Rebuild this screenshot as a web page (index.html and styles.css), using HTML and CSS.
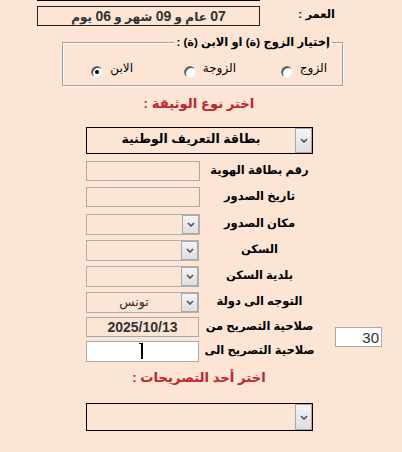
FILE: index.html
```html
<!DOCTYPE html>
<html lang="ar" dir="rtl">
<head>
<meta charset="utf-8">
<title>نموذج التصريح</title>
<link rel="stylesheet" href="styles.css">
</head>
<body>
<div class="page">
  <div class="topline"></div>
  <div class="age-row">
    <div class="age-label">العمر :</div>
    <div class="age-box"><b class="num">07</b> عام و <b class="num">09</b> شهر و <b class="num">06</b> يوم</div>
  </div>

  <fieldset class="rel">
    <legend>إختيار الزوج (ة) او الابن (ة) :</legend>
    <div class="radios">
      <label class="opt o1"><span>الزوج</span><span class="radio"></span></label>
      <label class="opt o2"><span>الزوجة</span><span class="radio"></span></label>
      <label class="opt o3"><span>الابن</span><span class="radio on"></span></label>
    </div>
  </fieldset>

  <h2 class="title t1">اختر نوع الوثيقة :</h2>

  <div class="form">
    <div class="bigsel">
      <span class="btn"><svg width="8" height="5" viewBox="0 0 8 5"><path d="M1 1l3 3 3-3" fill="none" stroke="#555" stroke-width="1.7"/></svg></span>
      <span class="val bold">بطاقة التعريف الوطنية</span>
    </div>

    <div class="lbl r2">رقم بطاقة الهوية</div>
    <input class="inp r2" type="text">

    <div class="lbl r3">تاريخ الصدور</div>
    <input class="inp r3" type="text">

    <div class="lbl r4">مكان الصدور</div>
    <div class="sel r4 wide">
      <span class="btn"><svg width="8" height="5" viewBox="0 0 8 5"><path d="M1 1l3 3 3-3" fill="none" stroke="#555" stroke-width="1.7"/></svg></span>
      <span class="val"></span>
    </div>

    <div class="lbl r5">السكن</div>
    <div class="sel r5">
      <span class="btn"><svg width="8" height="5" viewBox="0 0 8 5"><path d="M1 1l3 3 3-3" fill="none" stroke="#555" stroke-width="1.7"/></svg></span>
      <span class="val"></span>
    </div>

    <div class="lbl r6">بلدية السكن</div>
    <div class="sel r6">
      <span class="btn"><svg width="8" height="5" viewBox="0 0 8 5"><path d="M1 1l3 3 3-3" fill="none" stroke="#555" stroke-width="1.7"/></svg></span>
      <span class="val"></span>
    </div>

    <div class="lbl r7">التوجه الى دولة</div>
    <div class="sel r7">
      <span class="btn"><svg width="8" height="5" viewBox="0 0 8 5"><path d="M1 1l3 3 3-3" fill="none" stroke="#555" stroke-width="1.7"/></svg></span>
      <span class="val">تونس</span>
    </div>

    <div class="lbl r8">صلاحية التصريح من</div>
    <input class="inp date r8" type="text" value="2025/10/13" readonly>

    <div class="lbl r9">صلاحية التصريح الى</div>
    <div class="to-wrap r9">
      <input class="inp white" type="text">
      <span class="ibeam"></span>
    </div>

    <input class="days" type="text" value="30">
  </div>

  <h2 class="title t2">اختر أحد التصريحات :</h2>

  <div class="bigsel last">
    <span class="btn"><svg width="8" height="5" viewBox="0 0 8 5"><path d="M1 1l3 3 3-3" fill="none" stroke="#555" stroke-width="1.7"/></svg></span>
    <span class="val"></span>
  </div>
</div>
</body>
</html>
```

FILE: styles.css
```css
* { box-sizing: border-box; }

body {
  margin: 0;
  background: #fce5d4;
  font-family: "Liberation Sans", "DejaVu Sans", sans-serif;
  font-size: 11.5px;
  color: #000;
  direction: rtl;
}

.page { width: 402px; }

.topline {
  width: 223px;
  height: 1px;
  margin-right: 142px;
  background: #000;
}

.age-row {
  display: flex;
  margin-top: 5px;
  padding-right: 67px;
}

.age-label {
  width: 75px;
  font-weight: bold;
  line-height: 16px;
}

.age-box {
  width: 223px;
  height: 20px;
  border: 1px solid #222;
  font-weight: bold;
  font-size: 12px;
  color: #333;
  text-align: center;
  line-height: 18px;
}
.age-box .num { font-size: 14px; }

.rel {
  margin: 8px 59px 0 0;
  width: 281px;
  min-width: 0;
  padding: 0 10px 7px 0;
  border: 1px solid #a0a0a0;
  box-shadow: inset 1px 1px 0 #fff, 1px 1px 0 #fff;
}

.rel legend {
  padding: 0 2px;
  font-weight: bold;
  line-height: 16px;
  background: #fce5d4;
}

.radios {
  display: flex;
  margin: 10px 5px 0 0;
  height: 18px;
  font-size: 12px;
}

.opt {
  display: flex;
  gap: 7px;
  align-items: flex-start;
  line-height: 16px;
}
.o1 { width: 91px; }
.o2 { width: 103px; }

.radio {
  position: relative;
  width: 12px;
  height: 12px;
  margin-top: 6px;
  border-radius: 50%;
  background: #fff;
  border: 1px solid;
  border-color: #7a7a7a #eeeeee #eeeeee #7a7a7a;
  box-shadow: inset 1px 1px 0 #333;
}
.radio.on::after {
  content: "";
  position: absolute;
  left: 3px;
  top: 3px;
  width: 4px;
  height: 4px;
  border-radius: 50%;
  background: #000;
}

.title {
  margin: 0;
  font-size: 13.2px;
  line-height: 18px;
  color: #c0252c;
  text-align: center;
  padding-right: 4px;
}
.t1 { margin-top: 9px; }
.t2 { margin-top: 7px; }

.form {
  display: grid;
  grid-template-columns: 47px 16px 119px 114px;
  grid-template-rows: 34px 26px 27px 26px 26px 26px 25px 24px 21px;
  width: 296px;
  margin: 14px 20px 0 0;
}

.bold { font-weight: bold; }

.bigsel {
  display: flex;
  width: 227px;
  height: 27px;
  border: 1px solid #000;
}
.form .bigsel {
  grid-column: 3 / span 2;
  grid-row: 1;
  justify-self: end;
  align-self: start;
}
.bigsel.last {
  margin: 16px 89px 0 0;
  height: 28px;
}

.btn {
  flex: none;
  width: 17px;
  display: flex;
  align-items: center;
  justify-content: center;
  background: linear-gradient(#f4f4f4, #dedede);
  border: 1px solid #a8a8a8;
}

.val {
  flex: 1;
  text-align: center;
  overflow: hidden;
  white-space: nowrap;
}
.bigsel .val { line-height: 23px; font-size: 12.5px; }

.sel {
  display: flex;
  width: 113px;
  height: 21px;
  border: 1px solid #b0b0b0;
  grid-column: 4;
  justify-self: end;
  align-self: start;
}
.sel.wide { width: 114px; }
.sel .val { line-height: 18px; font-size: 12.5px; color: #2b2b2b; }

.lbl {
  grid-column: 3;
  align-self: start;
  text-align: center;
  font-weight: bold;
  line-height: 18px;
  white-space: nowrap;
}

.inp {
  grid-column: 4;
  align-self: start;
  justify-self: end;
  width: 114px;
  height: 20px;
  margin: 0;
  padding: 0;
  border: 1px solid #a9a9a9;
  background: transparent;
  font: inherit;
  outline: none;
}
.inp.date {
  width: 113px;
  text-align: center;
  font-weight: bold;
  font-size: 14px;
  color: #333;
}

.r2 { grid-row: 2; }
.r3 { grid-row: 3; }
.r4 { grid-row: 4; }
.r5 { grid-row: 5; }
.r6 { grid-row: 6; }
.r7 { grid-row: 7; }
.r8 { grid-row: 8; }
.r9 { grid-row: 9; }

.to-wrap {
  grid-column: 4;
  position: relative;
  justify-self: end;
  width: 113px;
  height: 21px;
}
.to-wrap .inp {
  width: 113px;
  height: 21px;
  background: #fff;
}
.ibeam {
  position: absolute;
  left: 55px;
  top: 2px;
  width: 2px;
  height: 16px;
  background: #000;
}
.ibeam::before {
  content: "";
  position: absolute;
  left: -2px;
  top: 0;
  width: 2px;
  height: 1px;
  background: #000;
}

.days {
  grid-column: 1;
  grid-row: 8 / span 2;
  align-self: start;
  margin: 10px 0 0;
  width: 47px;
  height: 20px;
  padding: 0 2px 0 0;
  border: 1px solid #a9a9a9;
  background: #fff;
  font-family: "Liberation Sans", sans-serif;
  font-size: 15px;
  color: #333;
  text-align: right;
  outline: none;
}
```
